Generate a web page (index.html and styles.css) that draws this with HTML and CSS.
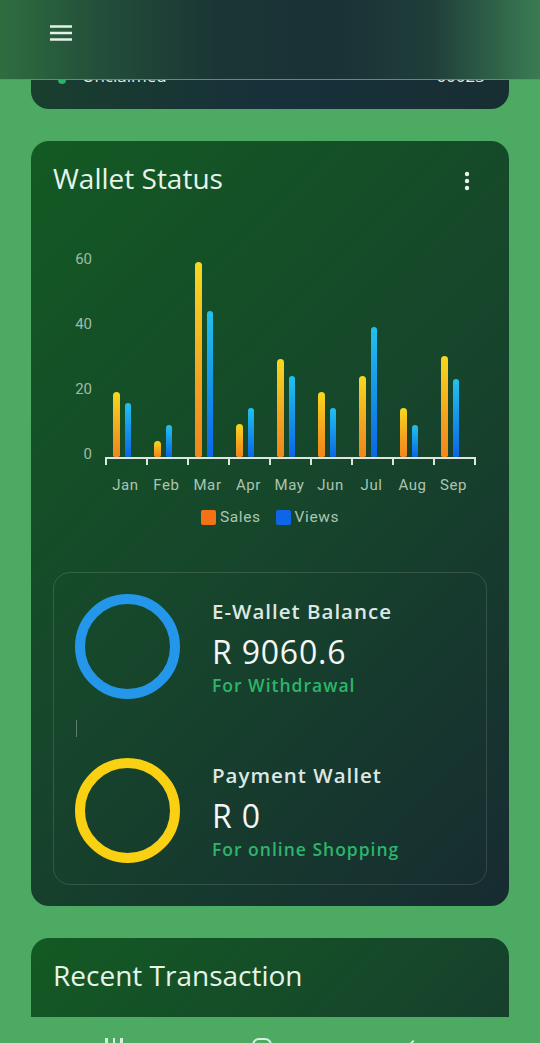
FILE: index.html
```html
<!DOCTYPE html>
<html lang="en">
<head>
<meta charset="utf-8">
<title>Wallet Status</title>
<link rel="stylesheet" href="styles.css">
</head>
<body>
<header class="topbar">
  <button class="menu-btn" aria-label="Menu">
    <svg width="24" height="18" viewBox="0 0 24 18"><path d="M1 2.5h22M1 9h22M1 15.5h22" stroke="#e3f2e8" stroke-width="2.6" stroke-linecap="butt"/></svg>
  </button>
</header>

<main class="page">
  <section class="card card-stats">
    <div class="stat-row">
      <span class="dot"></span>
      <span class="stat-name">Unclaimed</span>
      <span class="stat-value">00023</span>
    </div>
  </section>

  <section class="card wallet">
    <div class="card-head">
      <h2>Wallet Status</h2>
      <svg class="kebab" width="6" height="20" viewBox="0 0 6 20"><circle cx="3" cy="3" r="2.2" fill="#e8f3ec"/><circle cx="3" cy="10" r="2.2" fill="#e8f3ec"/><circle cx="3" cy="17" r="2.2" fill="#e8f3ec"/></svg>
    </div>

    <div class="chart">
      <div class="y-axis">
        <span>60</span><span>40</span><span>20</span><span>0</span>
      </div>
      <div class="plot">
        <div class="group"><i class="bar sales" style="height:65px"></i><i class="bar views" style="height:54px"></i></div>
        <div class="group"><i class="bar sales" style="height:16px"></i><i class="bar views" style="height:32px"></i></div>
        <div class="group"><i class="bar sales" style="height:195px"></i><i class="bar views" style="height:146px"></i></div>
        <div class="group"><i class="bar sales" style="height:33px"></i><i class="bar views" style="height:49px"></i></div>
        <div class="group"><i class="bar sales" style="height:98px"></i><i class="bar views" style="height:81px"></i></div>
        <div class="group"><i class="bar sales" style="height:65px"></i><i class="bar views" style="height:49px"></i></div>
        <div class="group"><i class="bar sales" style="height:81px"></i><i class="bar views" style="height:130px"></i></div>
        <div class="group"><i class="bar sales" style="height:49px"></i><i class="bar views" style="height:32px"></i></div>
        <div class="group"><i class="bar sales" style="height:101px"></i><i class="bar views" style="height:78px"></i></div>
      </div>
      <div class="x-axis"></div>
      <div class="x-labels">
        <span>Jan</span><span>Feb</span><span>Mar</span><span>Apr</span><span>May</span><span>Jun</span><span>Jul</span><span>Aug</span><span>Sep</span>
      </div>
    </div>

    <div class="legend">
      <span class="key"><i class="swatch swatch-sales"></i>Sales</span>
      <span class="key"><i class="swatch swatch-views"></i>Views</span>
    </div>

    <div class="balances">
      <div class="balance">
        <div class="ring ring-blue"></div>
        <div class="balance-text">
          <div class="balance-label">E-Wallet Balance</div>
          <div class="balance-amount">R 9060.6</div>
          <div class="balance-note">For Withdrawal</div>
        </div>
      </div>
      <div class="divider"></div>
      <div class="balance">
        <div class="ring ring-yellow"></div>
        <div class="balance-text">
          <div class="balance-label">Payment Wallet</div>
          <div class="balance-amount">R 0</div>
          <div class="balance-note">For online Shopping</div>
        </div>
      </div>
    </div>
  </section>

  <section class="card recent">
    <h2>Recent Transaction</h2>
    <div class="tx-head">Transaction</div>
    <div class="tx-row">No transactions yet</div>
  </section>
</main>

<nav class="sysnav" aria-label="System">
  <span class="nav-recent"><i></i><i></i><i></i></span>
  <span class="nav-home"></span>
  <span class="nav-back"></span>
</nav>
</body>
</html>
```

FILE: styles.css
```css
* { box-sizing: border-box; }
html, body { margin: 0; padding: 0; }
body { background: #4caa62; font-family: "Open Sans", "Noto Sans", sans-serif; color: #e8f3ec; overflow: hidden; height: 1043px; }

.topbar { position: fixed; top: 0; left: 0; right: 0; height: 80px; z-index: 5;
  background: linear-gradient(90deg, #2f6d3f 0%, #234f3a 18%, #1b3535 40%, #1a3135 62%, #1f3e3a 80%, #3a7c53 100%);
  border-bottom: 1px solid #5d8f72; display: flex; align-items: center; padding-left: 49px; }
.menu-btn { background: none; border: 0; padding: 0; margin-top: -14px; display: flex; }

.page { display: flex; flex-direction: column; gap: 32px; padding: 20px 31px 0; }

.card { border-radius: 18px; background: linear-gradient(135deg, #135a23 0%, #16462b 50%, #172b31 100%); }
.card h2 { margin: 0; font-size: 28px; font-weight: 500; line-height: 35px; color: #e6f4ea; }

.card-stats { height: 89px; display: flex; align-items: flex-end; padding: 0 24px 22px 27px;
  background: linear-gradient(90deg, #193f2d 0%, #17303a 50%, #172e33 100%); }
.stat-row { display: flex; align-items: flex-end; width: 100%; font-size: 17px; line-height: 22px; color: #e4eee8; }
.dot { width: 8px; height: 8px; border-radius: 50%; background: #2bb36a; margin: 0 16px 3px 0; }
.stat-value { margin-left: auto; }

.wallet { padding: 20px 22px 21px; }
.card-head { display: flex; align-items: center; justify-content: space-between; }
.kebab { margin-right: 17px; margin-top: 4px; }

.chart { display: grid; grid-template-columns: 52px 371px; margin-top: 44px; font-family: Roboto, "Liberation Sans", sans-serif; }
.y-axis { grid-row: 1 / span 2; display: flex; flex-direction: column; justify-content: flex-end; gap: 45px;
  padding: 0 13px 1px 0; text-align: right; font-size: 15px; line-height: 20px; color: #a0bba8; }
.plot { grid-column: 2; height: 217px; display: grid; grid-template-columns: repeat(9, 41px); }
.group { display: flex; align-items: flex-end; gap: 5px; padding-left: 8px; }
.bar { display: block; width: 7px; border-radius: 4px 4px 2px 2px; }
.sales { background: linear-gradient(180deg, #f7d81f 0%, #f4a21f 60%, #f0861b 100%); }
.views { width: 6px; background: linear-gradient(180deg, #22c1ee 0%, #1490ea 55%, #0b66e6 100%); }
.x-axis { grid-column: 2; height: 8px; border-top: 2px solid #dbe7df;
  background: repeating-linear-gradient(90deg, #dbe7df 0 2px, transparent 2px 41px); }
.x-labels { grid-column: 2; display: grid; grid-template-columns: repeat(9, 41px); margin-top: 10px;
  text-align: center; font-size: 15px; line-height: 20px; letter-spacing: 0.6px; color: #abc5b2; }

.legend { display: flex; justify-content: center; gap: 15px; margin-top: 12px;
  font-family: Roboto, "Liberation Sans", sans-serif; font-size: 15.5px; line-height: 20px; letter-spacing: 0.6px; color: #abc6b3; }
.key { display: flex; align-items: center; gap: 4px; }
.swatch { width: 15px; height: 15px; border-radius: 2px; }
.swatch-sales { background: #f47216; }
.swatch-views { background: #0d66e8; }

.balances { margin-top: 45px; border: 1px solid rgba(255,255,255,0.13); border-radius: 17px; padding: 21px; }
.balance { display: flex; align-items: center; gap: 32px; }
.ring { width: 105px; height: 105px; border-radius: 50%; border: 10px solid; flex: none; }
.ring-blue { border-color: #2597ea; }
.ring-yellow { border-color: #f9d012; }
.divider { width: 1px; height: 17px; margin: 21px 0 21px 1px; background: rgba(255,255,255,0.3); }
.balance-text { letter-spacing: 1px; }
.balance-label { font-size: 20.5px; font-weight: 600; line-height: 26px; color: #dde7e3; }
.balance-amount { font-size: 32px; line-height: 44px; margin-top: 6px; color: #f4f7f5; letter-spacing: 0.8px; }
.balance-note { font-size: 17.5px; font-weight: 600; line-height: 22px; color: #2db56b; }

.recent { height: 400px; padding: 20px 22px; }
.tx-head { margin-top: 16px; font-size: 22px; line-height: 30px; color: #dfeee4; }
.tx-row { margin-top: 12px; font-size: 16px; }

.sysnav { position: fixed; left: 0; right: 0; bottom: 0; height: 26px; background: #4caa62; overflow: hidden;
  display: flex; align-items: flex-start; padding: 21px 0 0 105px; }
.nav-recent { display: flex; gap: 5px; width: 18px; }
.nav-recent i { display: block; width: 2.5px; height: 14px; background: #d9efdf; }
.nav-home { width: 20px; height: 20px; border: 2px solid #d9efdf; border-radius: 7px; margin-left: 129px; }
.nav-back { width: 10px; height: 10px; border-left: 2px solid #d9efdf; border-top: 2px solid #d9efdf; transform: rotate(-45deg); margin: 4px 0 0 136px; }
```
